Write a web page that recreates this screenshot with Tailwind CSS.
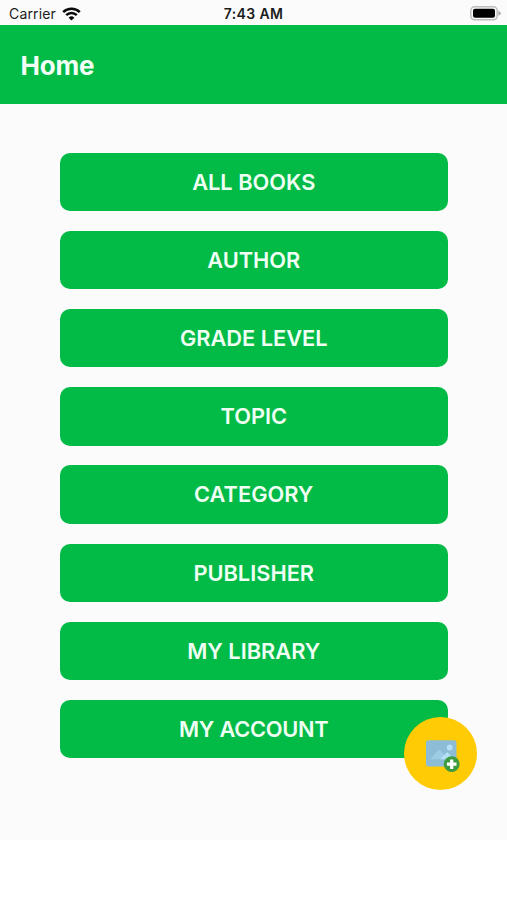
<!DOCTYPE html>
<html lang="en">
<head>
  <meta charset="UTF-8" />
  <meta name="viewport" content="width=device-width, initial-scale=1.0">
  <title>Home</title>
  <script src="https://cdn.jsdelivr.net/npm/@tailwindcss/browser@4"></script>
</head>
<body class="bg-white font-['Inter',sans-serif]">
  <div class="relative flex flex-col h-[840px] bg-[#fbfbfb]">
    <!-- Status bar -->
    <div class="grid grid-cols-3 items-center h-[25.4px] pt-[2px] pl-[9px] pr-[6px] text-[14px] text-[#1c1c1c]">
      <div class="flex items-center gap-[6px]">
        <span class="tracking-[0.15px]">Carrier</span>
        <svg class="w-[19px] h-[14px]" viewBox="0 0 19 14" fill="none" stroke="#0a0a0a" stroke-width="2.5">
          <path d="M1.2 5.1a11.8 11.8 0 0 1 16.6 0" />
          <path d="M4.2 8.2a7.5 7.5 0 0 1 10.6 0" />
          <path d="M9.5 13.6 6.6 10.7a4.1 4.1 0 0 1 5.8 0Z" fill="#0a0a0a" stroke="none" />
        </svg>
      </div>
      <span class="-ml-[3px] text-center font-semibold tracking-[0.35px] whitespace-nowrap">7:43 AM</span>
      <svg class="justify-self-end w-[31px] h-[15px]" viewBox="0 0 31 15">
        <rect x="0.8" y="0.8" width="26.4" height="13" rx="3.8" fill="#fbfbfb" stroke="#bdbdbd" stroke-width="1.5" />
        <rect x="3" y="2.8" width="22" height="9" rx="2" fill="#000" />
        <path d="M28.4 4.8q2.4 1 2.4 2.5t-2.4 2.5Z" fill="#a8a8a8" />
      </svg>
    </div>

    <!-- Header -->
    <header class="flex items-center h-[78.2px] px-[20.5px] pt-[2px] bg-[#02ba46]">
      <h1 class="text-[26px] font-bold tracking-[-0.2px] text-[#f2fff6]">Home</h1>
    </header>

    <!-- Menu -->
    <nav class="flex flex-col gap-[19.8px] pt-[49px] pl-[59.5px] pr-[59px] text-[21.8px] font-semibold text-[#effff4]">
      <button class="h-[58.4px] pt-[0.6px] rounded-[10px] bg-[#02ba46]">ALL BOOKS</button>
      <button class="h-[58.4px] pt-[0.6px] rounded-[10px] bg-[#02ba46]">AUTHOR</button>
      <button class="h-[58.4px] pt-[0.6px] rounded-[10px] bg-[#02ba46]">GRADE LEVEL</button>
      <button class="h-[58.4px] pt-[0.6px] rounded-[10px] bg-[#02ba46]">TOPIC</button>
      <button class="h-[58.4px] pt-[0.6px] rounded-[10px] bg-[#02ba46]">CATEGORY</button>
      <button class="h-[58.4px] pt-[0.6px] rounded-[10px] bg-[#02ba46]">PUBLISHER</button>
      <button class="h-[58.4px] pt-[0.6px] rounded-[10px] bg-[#02ba46]">MY LIBRARY</button>
      <button class="h-[58.4px] pt-[0.6px] rounded-[10px] bg-[#02ba46] tracking-[-0.25px]">MY ACCOUNT</button>
    </nav>

    <!-- Floating add picture button -->
    <button class="absolute right-[30px] bottom-[50px] size-[73px] rounded-full bg-[#ffcb05]" aria-label="Add picture">
      <svg class="size-full" viewBox="0 0 73 73">
        <rect x="22" y="23.3" width="30.5" height="26.2" rx="2.5" fill="#8cbcd6" />
        <circle cx="45.7" cy="30.5" r="2.9" fill="#b5dff5" />
        <path d="M26 42.3l8.4-9.6q.6-.6 1.2 0l8.4 9.6Z" fill="#9ccbe3" />
        <path d="M36 42.3l6.7-6.8q.6-.5 1.2 0l6 6.8Z" fill="#b5dff5" />
        <circle cx="47.7" cy="47.2" r="7.9" fill="#3c9a3f" />
        <path d="M47.7 42.4v9.6M42.9 47.2h9.6" stroke="#fff" stroke-width="3.2" />
      </svg>
    </button>
  </div>
</body>
</html>
